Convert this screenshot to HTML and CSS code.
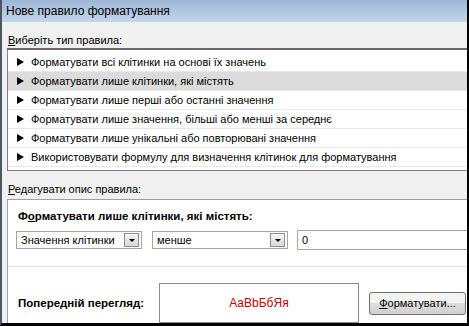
FILE: index.html
```html
<!DOCTYPE html>
<html>

<head>
    <title>Нове правило форматування</title>
    <link rel="stylesheet" href="styles.css">
</head>

<body>
    <div class="dialog">
        <div class="titlebar">Нове правило форматування</div>
        <div class="dialog-body">
            <div class="section-label"><u>В</u>иберіть тип правила:</div>
            <div class="rule-list">
                <div class="rule-item"><span class="arrow"></span>Форматувати всі клітинки на основі їх значень</div>
                <div class="rule-item selected"><span class="arrow"></span>Форматувати лише клітинки, які містять</div>
                <div class="rule-item"><span class="arrow"></span>Форматувати лише перші або останні значення</div>
                <div class="rule-item"><span class="arrow"></span>Форматувати лише значення, більші або менші за середнє</div>
                <div class="rule-item"><span class="arrow"></span>Форматувати лише унікальні або повторювані значення</div>
                <div class="rule-item"><span class="arrow"></span>Використовувати формулу для визначення клітинок для форматування</div>
            </div>
            <div class="section-label edit-label"><u>Р</u>едагувати опис правила:</div>
            <div class="rule-panel">
                <div class="panel-title">Ф<u>о</u>рматувати лише клітинки, які містять:</div>
                <div class="controls">
                    <div class="combo combo-first">
                        <span class="combo-text">Значення клітинки</span>
                        <span class="combo-btn"><span class="down"></span></span>
                    </div>
                    <div class="combo combo-second">
                        <span class="combo-text">менше</span>
                        <span class="combo-btn"><span class="down"></span></span>
                    </div>
                    <div class="value-input">0</div>
                </div>
                <div class="separator"></div>
                <div class="preview-row">
                    <div class="preview-label">Попередній перегляд:</div>
                    <div class="preview-box">AaBbБбЯя</div>
                    <div class="format-btn"><u>Ф</u>орматувати...</div>
                </div>
            </div>
        </div>
    </div>
</body>

</html>
```

FILE: styles.css
```css
body {
    margin: 0;
    width: 469px;
    height: 326px;
    overflow: hidden;
    font-family: "Liberation Sans", Arial, sans-serif;
    font-size: 11px;
    color: #000;
}

.dialog {
    box-sizing: border-box;
    width: 469px;
    height: 326px;
    background-color: #f0f0f0;
    border-left: 2px solid #4f5760;
    border-right: 2px solid #000;
    border-bottom: 3px solid #000;
    display: flex;
    flex-direction: column;
    overflow: hidden;
}

.titlebar {
    height: 22px;
    line-height: 22px;
    padding-left: 4px;
    font-size: 12px;
    background: linear-gradient(#9fb7d4, #c3d6ec);
}

.dialog-body {
    flex: 1;
    display: flex;
    flex-direction: column;
    padding-left: 5px;
}

.section-label {
    margin-top: 10px;
    padding-left: 1px;
    line-height: 16px;
}

.edit-label {
    margin-bottom: 2px;
}

.rule-list {
    background-color: #fff;
    border-top: 2px solid #6a6a6a;
    border-left: 1px solid #828282;
    border-bottom: 1px solid #828282;
    padding: 3px 0 3px 0;
}

.rule-item {
    box-sizing: border-box;
    height: 19px;
    display: flex;
    align-items: center;
    padding-left: 9px;
    border-bottom: 1px solid #e8e8e8;
    white-space: nowrap;
}

.rule-item.selected {
    background-color: #dcdcdc;
}

.arrow {
    width: 0;
    height: 0;
    border-left: 7px solid #000;
    border-top: 4px solid transparent;
    border-bottom: 4px solid transparent;
    margin-right: 7px;
}

.rule-panel {
    flex: 1;
    background-color: #fff;
    border-top: 1px solid #a0a0a0;
    border-left: 1px solid #a0a0a0;
    padding-left: 10px;
    display: flex;
    flex-direction: column;
}

.panel-title {
    margin-top: 9px;
    line-height: 15px;
    font-weight: bold;
    font-size: 11.5px;
}

.controls {
    margin-top: 6px;
    height: 20px;
    display: flex;
    align-items: center;
    margin-left: -2px;
}

.combo {
    box-sizing: border-box;
    flex-shrink: 0;
    height: 18px;
    border: 1px solid #a5a5a5;
    display: flex;
    align-items: center;
    padding-left: 4px;
    background-color: #fff;
}

.combo-first {
    width: 126px;
}

.combo-second {
    width: 136px;
    margin-left: 10px;
}

.combo-text {
    flex: 1;
    white-space: nowrap;
}

.combo-btn {
    box-sizing: border-box;
    width: 15px;
    height: 14px;
    margin-right: 2px;
    border: 1px solid #8e8e8e;
    background: linear-gradient(#f6f6f6, #d8d8d8);
    display: flex;
    align-items: center;
    justify-content: center;
}

.down {
    width: 0;
    height: 0;
    border-top: 3px solid #000;
    border-left: 3px solid transparent;
    border-right: 3px solid transparent;
}

.value-input {
    box-sizing: border-box;
    flex-shrink: 0;
    width: 190px;
    height: 20px;
    margin-left: 9px;
    border: 1px solid #a5a5a5;
    padding-left: 4px;
    line-height: 18px;
}

.separator {
    margin-top: 16px;
    margin-left: -10px;
    height: 1px;
    background-color: #e3e3e3;
}

.preview-row {
    margin-top: 16px;
    display: flex;
    align-items: center;
}

.preview-label {
    flex-shrink: 0;
    width: 141px;
    font-weight: bold;
    font-size: 11.5px;
}

.preview-box {
    box-sizing: border-box;
    flex-shrink: 0;
    width: 200px;
    height: 40px;
    border: 1px solid #8c8c8c;
    display: flex;
    align-items: center;
    justify-content: center;
    color: #c00000;
    font-size: 12px;
}

.format-btn {
    box-sizing: border-box;
    flex-shrink: 0;
    width: 97px;
    height: 23px;
    margin-left: 10px;
    border: 1px solid #707070;
    border-radius: 3px;
    background: linear-gradient(#f3f3f3 50%, #dddddd 50%, #d0d0d0);
    display: flex;
    align-items: center;
    justify-content: center;
    white-space: nowrap;
}
```
